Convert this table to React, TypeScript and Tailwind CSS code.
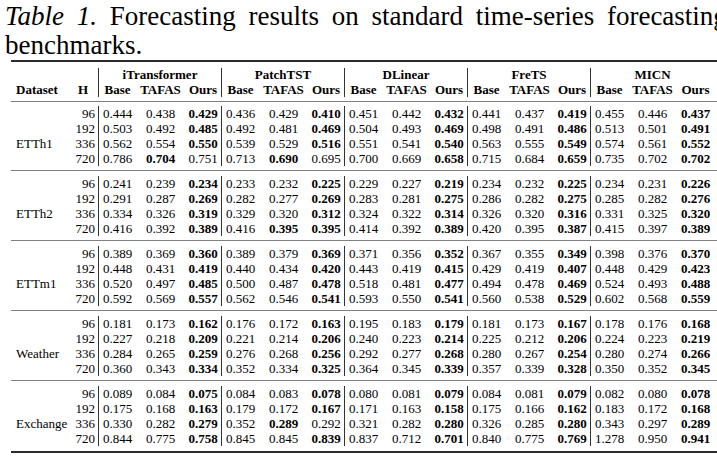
const MODELS = ["iTransformer", "PatchTST", "DLinear", "FreTS", "MICN"];
const HORIZONS = ["96", "192", "336", "720"];

// "*" marks the best value (bold)
const BLOCKS: { name: string; rows: string[] }[] = [
  {
    name: "ETTh1",
    rows: [
      "0.444 0.438 *0.429 0.436 0.429 *0.410 0.451 0.442 *0.432 0.441 0.437 *0.419 0.455 0.446 *0.437",
      "0.503 0.492 *0.485 0.492 0.481 *0.469 0.504 0.493 *0.469 0.498 0.491 *0.486 0.513 0.501 *0.491",
      "0.562 0.554 *0.550 0.539 0.529 *0.516 0.551 0.541 *0.540 0.563 0.555 *0.549 0.574 0.561 *0.552",
      "0.786 *0.704 0.751 0.713 *0.690 0.695 0.700 0.669 *0.658 0.715 0.684 *0.659 0.735 0.702 *0.702",
    ],
  },
  {
    name: "ETTh2",
    rows: [
      "0.241 0.239 *0.234 0.233 0.232 *0.225 0.229 0.227 *0.219 0.234 0.232 *0.225 0.234 0.231 *0.226",
      "0.291 0.287 *0.269 0.282 0.277 *0.269 0.283 0.281 *0.275 0.286 0.282 *0.275 0.285 0.282 *0.276",
      "0.334 0.326 *0.319 0.329 0.320 *0.312 0.324 0.322 *0.314 0.326 0.320 *0.316 0.331 0.325 *0.320",
      "0.416 0.392 *0.389 0.416 *0.395 *0.395 0.414 0.392 *0.389 0.420 0.395 *0.387 0.415 0.397 *0.389",
    ],
  },
  {
    name: "ETTm1",
    rows: [
      "0.389 0.369 *0.360 0.389 0.379 *0.369 0.371 0.356 *0.352 0.367 0.355 *0.349 0.398 0.376 *0.370",
      "0.448 0.431 *0.419 0.440 0.434 *0.420 0.443 0.419 *0.415 0.429 0.419 *0.407 0.448 0.429 *0.423",
      "0.520 0.497 *0.485 0.500 0.487 *0.478 0.518 0.481 *0.477 0.494 0.478 *0.469 0.524 0.493 *0.488",
      "0.592 0.569 *0.557 0.562 0.546 *0.541 0.593 0.550 *0.541 0.560 0.538 *0.529 0.602 0.568 *0.559",
    ],
  },
  {
    name: "Weather",
    rows: [
      "0.181 0.173 *0.162 0.176 0.172 *0.163 0.195 0.183 *0.179 0.181 0.173 *0.167 0.178 0.176 *0.168",
      "0.227 0.218 *0.209 0.221 0.214 *0.206 0.240 0.223 *0.214 0.225 0.212 *0.206 0.224 0.223 *0.219",
      "0.284 0.265 *0.259 0.276 0.268 *0.256 0.292 0.277 *0.268 0.280 0.267 *0.254 0.280 0.274 *0.266",
      "0.360 0.343 *0.334 0.352 0.334 *0.325 0.364 0.345 *0.339 0.357 0.339 *0.328 0.350 0.352 *0.345",
    ],
  },
  {
    name: "Exchange",
    rows: [
      "0.089 0.084 *0.075 0.084 0.083 *0.078 0.080 0.081 *0.079 0.084 0.081 *0.079 0.082 0.080 *0.078",
      "0.175 0.168 *0.163 0.179 0.172 *0.167 0.171 0.163 *0.158 0.175 0.166 *0.162 0.183 0.172 *0.168",
      "0.330 0.282 *0.279 0.352 *0.289 0.292 0.321 0.282 *0.280 0.326 0.285 *0.280 0.343 0.297 *0.289",
      "0.844 0.775 *0.758 0.845 0.845 *0.839 0.837 0.712 *0.701 0.840 0.775 *0.769 1.278 0.950 *0.941",
    ],
  },
];

const CELL_W = ["w-[37px]", "w-[49px]", "w-[37px]"];

function Cell({ v, i, last }: { v: string; i: number; last: boolean }) {
  const bold = v.startsWith("*");
  const border = i === 2 && !last ? "border-r border-[#333]" : "";
  return (
    <div className={`${CELL_W[i]} ${border} text-center ${bold ? "font-bold" : ""}`}>
      {bold ? v.slice(1) : v}
    </div>
  );
}

function Rule({ thick }: { thick?: boolean }) {
  return <div className={thick ? "h-[2px] bg-[#2b2b2b]" : "h-px bg-[#808080]"} />;
}

export default function App() {
  return (
    <div
      className="w-[717px] h-[456px] overflow-hidden bg-white text-black"
      style={{ fontFamily: '"Liberation Serif", "Times New Roman", serif' }}
    >
      {/* caption: first line is justified in the paper, hence the wider word spacing */}
      <div className="pl-[5px] pt-[2px] text-[27px] leading-[29px] whitespace-nowrap">
        <span className="[word-spacing:6px]">
          <i>Table 1.</i> Forecasting results on standard time-series forecasting
        </span>
        <br />
        benchmarks.
      </div>

      <div className="ml-[11px] w-[712px] text-[13px] leading-[15px]">
        <Rule thick />
        <div className="h-[6px]" />
        {/* header row 1: model names */}
        <div className="flex h-[14px] leading-[14px]">
          <div className="w-[61px]" />
          <div className="w-[27px] border-r border-[#333]" />
          {MODELS.map((m, g) => (
            <div
              key={m}
              className={`w-[123px] text-center font-bold ${g < 4 ? "border-r border-[#333]" : ""}`}
            >
              {m}
            </div>
          ))}
        </div>
        {/* header row 2 */}
        <div className="flex h-[15px] font-bold">
          <div className="w-[61px] pl-[5px]">Dataset</div>
          <div className="w-[27px] border-r border-[#333] text-right pr-[10px]">H</div>
          {MODELS.map((m, g) => (
            <div key={m} className="flex">
              {["Base", "TAFAS", "Ours"].map((h, i) => (
                <div
                  key={h}
                  className={`${CELL_W[i]} text-center ${i === 2 && g < 4 ? "border-r border-[#333]" : ""}`}
                >
                  {h}
                </div>
              ))}
            </div>
          ))}
        </div>
        <div className="h-[4px]" />
        <Rule />
        <div className="h-[4px]" />

        {BLOCKS.map((b, bi) => (
          <div key={b.name}>
            {b.rows.map((row, ri) => {
              const vals = row.split(" ");
              return (
                <div key={ri} className="flex h-[15px]">
                  <div className="w-[61px] pl-[5px]">{ri === 2 ? b.name : ""}</div>
                  <div className="w-[27px] border-r border-[#333] text-right pr-[3px]">
                    {HORIZONS[ri]}
                  </div>
                  {MODELS.map((m, g) => (
                    <div key={m} className="flex">
                      {[0, 1, 2].map((i) => (
                        <Cell key={i} v={vals[g * 3 + i]} i={i} last={g === 4} />
                      ))}
                    </div>
                  ))}
                </div>
              );
            })}
            {bi < BLOCKS.length - 1 ? (
              <>
                <div className="h-[4px]" />
                <Rule />
                <div className="h-[5px]" />
              </>
            ) : (
              <>
                <div className="h-[5px]" />
                <Rule thick />
              </>
            )}
          </div>
        ))}
      </div>
    </div>
  );
}
